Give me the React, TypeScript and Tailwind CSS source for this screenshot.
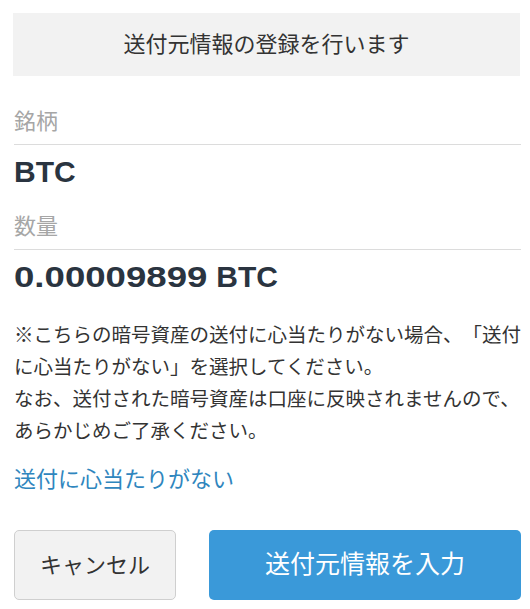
import React from "react";

const FONT = "font-['Liberation_Sans','Noto_Sans_CJK_JP',sans-serif]";

function Field({ label, value, first }: { label: string; value: React.ReactNode; first?: boolean }) {
  return (
    <div>
      <div
        className={`${first ? "mt-[31px]" : "mt-[20px]"} border-b border-[#dcdcdc] pb-[7px] text-[22px] leading-[30px] text-[#a6a6a6]`}
      >
        {label}
      </div>
      <div className="mt-[7px] text-[30px] font-bold leading-[40px] text-[#2a3440]">{value}</div>
    </div>
  );
}

export default function App() {
  return (
    <div className={`min-h-screen w-[530px] bg-white pl-[14px] pr-[9px] ${FONT}`}>
      {/* header notice */}
      <div className="relative -left-px mt-[13px] flex h-[63px] items-center justify-center bg-[#f2f2f2] text-[22px] text-[#333]">
        送付元情報の登録を行います
      </div>

      <Field label="銘柄" value="BTC" first />
      <Field
        label="数量"
        value={
          <>
            <span className="inline-block w-[194px]">
              <span className="inline-block origin-left scale-x-[1.22]">0.00009899</span>
            </span>{" "}
            BTC
          </>
        }
      />

      {/* note */}
      <p className="mt-[22px] whitespace-nowrap text-[19.5px] leading-[32px] text-[#333] [text-spacing-trim:space-all]">
        ※こちらの暗号資産の送付に心当たりがない場合、「送付
        <br />
        に心当たりがない」を選択してください。
        <br />
        なお、送付された暗号資産は口座に反映されませんので、
        <br />
        あらかじめご了承ください。
      </p>

      <a className="mt-[17px] block text-[22px] leading-[32px] text-[#2f86be]">送付に心当たりがない</a>

      {/* actions */}
      <div className="mt-[34px] flex gap-[33px]">
        <button className="h-[70px] w-[162px] rounded-[5px] border border-[#cfcfcf] bg-[#f2f2f2] text-[22px] text-[#333]">
          キャンセル
        </button>
        <button className="h-[70px] flex-1 rounded-[5px] bg-[#3a99d9] text-[25px] text-white">
          送付元情報を入力
        </button>
      </div>
    </div>
  );
}
